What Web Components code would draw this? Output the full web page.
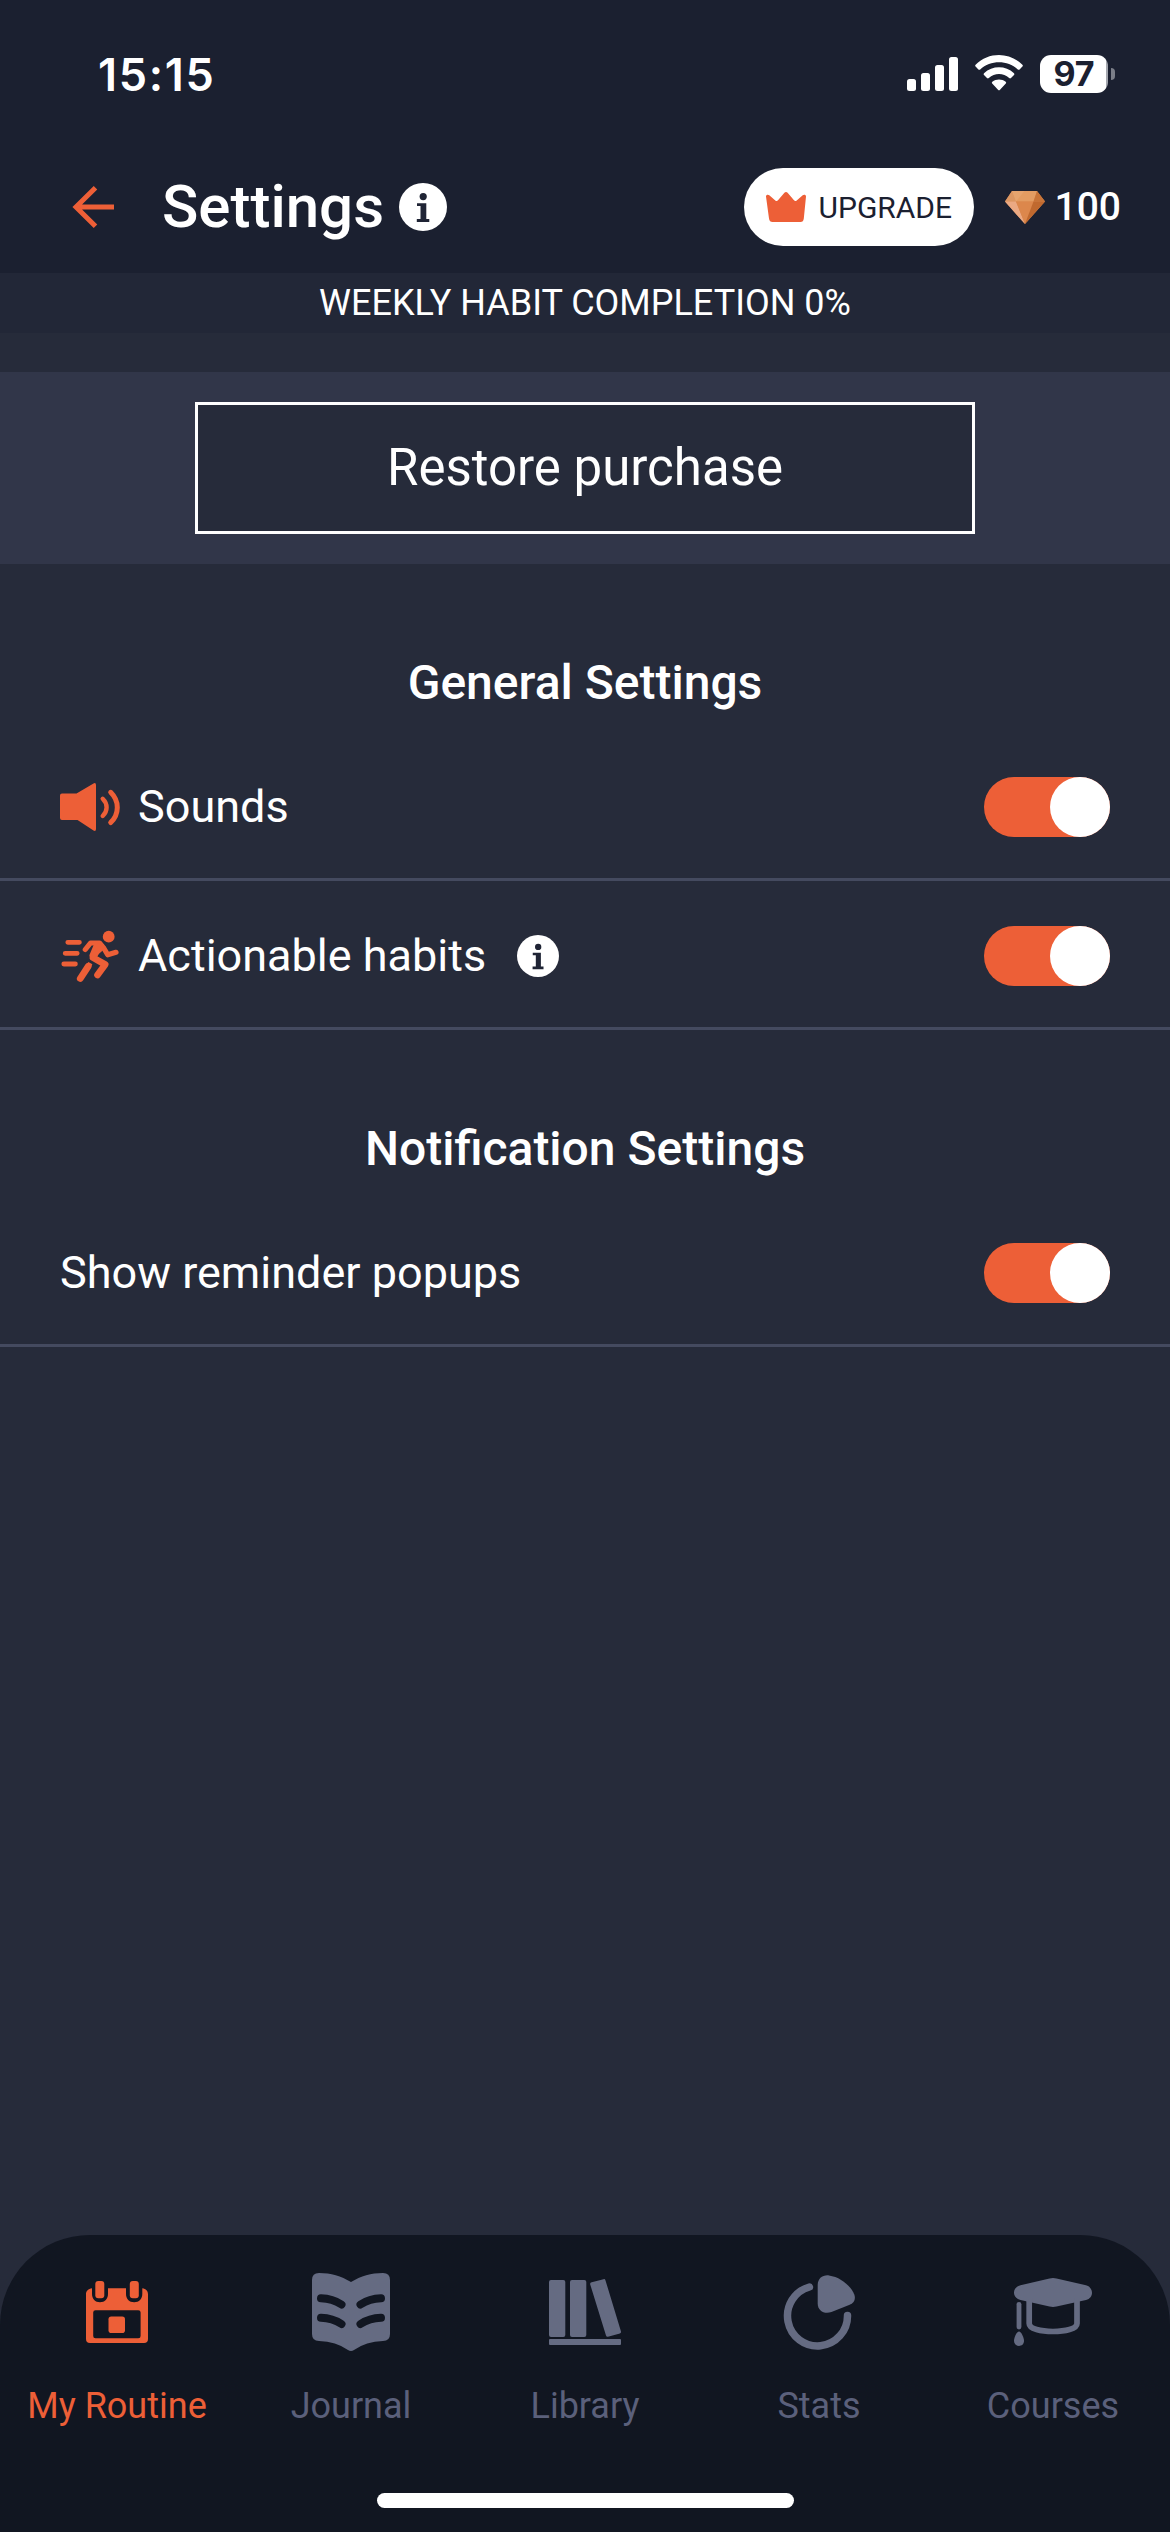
<!DOCTYPE html>
<html lang="en">
<head>
<meta charset="utf-8">
<title>Settings</title>
<style>
  html, body { margin: 0; height: 100%; background: #262b3a; }
  body { font-family: Roboto, sans-serif; color: #fff; }
</style>
</head>
<body>
<settings-app></settings-app>

<script>
const define = (name, html) => {
  const tpl = document.createElement('template');
  tpl.innerHTML = html;
  customElements.define(name, class extends HTMLElement {
    constructor() {
      super();
      this.attachShadow({ mode: 'open' }).append(tpl.content.cloneNode(true));
    }
  });
};

const ICONS = {
  back: [42, 42, `<path d="M23.5 1.8 4 21l19.500 19.200M4 21h38" fill="none" stroke="#ed5f37" stroke-width="5"/>`],
  info: [48, 48, `<circle cx="24" cy="24" r="24" fill="#fff"/><circle cx="24.200" cy="13.600" r="3.600" fill="#1f2435"/><path d="M18 20.300h9.300v15.800h3V39H17.800v-2.900h3.700V23H18z" fill="#1f2435"/>`],
  crown: [40, 30, `<path d="M0 4.500C0 2.600 2 2.200 3.300 3.300L9.300 8.400c.9.800 1.900.7 2.700-.1L18.400.8c.9-1.100 2.300-1.100 3.200 0L28 8.300c.8.800 1.800.9 2.700.1l6-5.100C38 2.200 40 2.600 40 4.500l-2.200 22C37.500 29 36.500 30 34.500 30h-28c-2 0-3.200-1-3.500-3.500z" fill="#ed5f37"/>`],
  gem: [40, 33, `<path d="M7 0h25l8 10.500L20 33 0 10.500z" fill="#d98850"/><path d="M7 0 0 10.500h11z" fill="#dc9763"/><path d="M7 0h25l-3.500 10.500H11z" fill="#e39c62"/><path d="M7 0l4 10.500L19.500 0z" fill="#e6a46e"/><path d="m32 0 8 10.500H28.500z" fill="#c87438"/><path d="M0 10.500h11L20 33z" fill="#eba983"/><path d="M11 10.500h17.500L20 33z" fill="#dc874c"/><path d="M28.500 10.500H40L20 33z" fill="#c0692f"/>`],
  signal: [51, 34, `<g fill="#fff"><rect y="22" width="9" height="12" rx="2.500"/><rect x="14" y="16" width="9" height="18" rx="2.500"/><rect x="28" y="8" width="9" height="26" rx="2.500"/><rect x="42" width="9" height="34" rx="2.500"/></g>`],
  wifi: [48, 36, `<g fill="#fff"><path d="M.6 9.800C13.500-3.200 34.500-3.200 47.400 9.800q.9.900 0 1.800L44.600 14.400q-.9.900-1.800 0C32.500 4.900 15.500 4.900 5.200 14.400q-.9.900-1.800 0L.6 11.600q-.9-.9 0-1.800z"/><path d="M9 18.200c8.500-7.900 21.500-7.900 30 0q.9.900 0 1.800l-3 3q-.9.900-1.800 0c-5.900-5.200-14.500-5.200-20.400 0q-.9.900-1.800 0l-3-3q-.9-.9 0-1.800z"/><path d="M17.300 26.700c3.900-3.100 9.500-3.100 13.400 0q1 .9.100 1.800L25 34.800q-1 1-2 0l-5.800-6.300q-.9-.9.100-1.800z"/></g>`],
  sound: [60, 48, `<path d="M2 10.500h14.500L33.500.4Q36 -.6 36 2v44q0 2.600-2.500 1.600L17.500 37H2q-2 0-2-2V12.500q0-2 2-2z" fill="#ed5f37"/><g fill="none" stroke="#ed5f37" stroke-linecap="round"><path d="M42.700 15.800c5.200 5.200 5.200 12 0 17.200" stroke-width="4.400"/><path d="M50.700 9.300c8.800 8.800 8.800 21.500 0 30.300" stroke-width="5"/></g>`],
  run: [60, 52, `<g fill="none" stroke="#ed5f37" stroke-linecap="round" stroke-linejoin="round"><path d="M7.800 12.300h11.600M5.200 23.300h12M3.800 34h11.600" stroke-width="4.800"/><path d="m25.300 19.500 5.200-6.500h9l4.500 5.500 3.700 6.300 8.300-2.500" stroke-width="5.200"/><path d="m39.500 15.500-6.500 12.200 12.200 6.800-7.700 10.500" stroke-width="6.600"/><path d="M36.500 16 32.500 25.500 41 18z" fill="#ed5f37" stroke-width="6"/><path d="M28.200 36.300 20.300 48.500" stroke-width="6.800"/><path d="m27.500 33.500 4 2.300" stroke-width="3.500" stroke-linecap="butt"/></g><circle cx="48.700" cy="6.700" r="5.900" fill="#ed5f37"/>`],
  routine: [62, 62, `<g fill="#ed5f37"><path d="M6 7.300v5.500C6 18.200 9.200 21.300 14 21.300s8-3.100 8-8.500V7.300h18v5.500c0 5.400 3.200 8.500 8.200 8.500 4.900 0 8.100-3.100 8.100-8.500V7.300c3.700.3 5.700 2.900 5.700 6V58c0 2.700-1.300 4-4 4H4c-2.700 0-4-1.300-4-4V13.300c0-3.100 2.300-5.700 6-6zM9.500 29.300Q7.200 29.300 7.200 31.600V55q0 2.300 2.300 2.300h42.800q2.300 0 2.300-2.300V31.600q0-2.300-2.300-2.300z" fill-rule="evenodd"/><rect x="9.300" width="9" height="17.300" rx="3"/><rect x="43.800" width="9" height="17.300" rx="3"/><rect x="22.500" y="35.500" width="16.500" height="16.500" rx="2.800"/></g>`],
  journal: [78, 78, `<path d="M7 0C19 0 29 3 39 9 49 3 59 0 71 0q7 0 7 7v54q0 7-7 7-17 .5-29 9-3 2-6 0Q24 68.500 7 68q-7 0-7-7V7q0-7 7-7z" fill="#656b82"/><path d="M9 25.300q11.500.4 20.500 6.200M9 44.800q11.500.4 20.500 6.200M69 25.300q-11.500.4-20.500 6.200M69 44.800q-11.500.4-20.500 6.200" fill="none" stroke="#111621" stroke-width="8" stroke-linecap="round"/>`],
  library: [72, 66, `<g fill="#656b82"><rect y="1" width="16.300" height="57" rx="2"/><rect x="21" y="1" width="16.300" height="57" rx="2"/><path d="M42.700 3.200 54.500.2q1.500-.4 2 1.200L72 52.500q.4 1.500-1.100 2L59 57.700q-1.500.4-2-1.100L41.200 5.400q-.4-1.700 1.500-2.200z"/><rect y="60" width="72" height="6" rx="1"/></g>`],
  stats: [70, 75, `<path d="M25.400 12A30 30 0 1 0 63.500 40.500" fill="none" stroke="#656b82" stroke-width="7.500" stroke-linecap="round"/><path d="M33.700 10C33.700 3.500 38.500-.3 45 .4 56.500 2 66.500 10.500 70.300 19.500c1.600 4.500-.1 8.300-4.600 10.300L47.500 37C40.500 39.500 33.700 36 33.700 28.500z" fill="#656b82"/>`],
  courses: [78, 69, `<path d="M6.500 7.300 35.500.5Q39-.4 42.500.5L72 7.300c8 2.200 8 12.500 0 14.700L42.500 28.500q-3.500.9-7 0L6.500 22C-2.200 19.800-2.200 9.500 6.500 7.300z" fill="#656b82"/><path d="M15.200 20v25.500C15.200 51 27 53.500 39 53.500S63 51 63 45.500V20" fill="none" stroke="#656b82" stroke-width="5.700"/><path d="M5 26.300v22.800" stroke="#656b82" stroke-width="4.800" stroke-linecap="round"/><path d="M5 53.400c2.200 0 5 6.100 5 9.400 0 6.900-10 6.900-10 0 0-3.300 2.800-9.400 5-9.400z" fill="#656b82"/>`]
};

customElements.define('ui-icon', class extends HTMLElement {
  constructor() { super(); this.attachShadow({ mode: 'open' }); }
  connectedCallback() {
    const [w, h, body] = ICONS[this.getAttribute('name')];
    const width = this.getAttribute('width') || w;
    this.shadowRoot.innerHTML =
      `<style>:host{display:block;flex:none}svg{display:block;overflow:visible}</style>
       <svg width="${width}" height="${width * h / w}" viewBox="0 0 ${w} ${h}">${body}</svg>`;
  }
});

define('battery-level', `
<style>
  :host { display: flex; align-items: center; gap: 3px; }
  .cell { box-sizing: border-box; width: 68px; height: 38px; border-radius: 11px;
    background: linear-gradient(90deg, #fff 66px, #a4a7af 66px);
    color: #1b2030; font: 700 34px/38px Inter, sans-serif; text-align: center; }
  .nub { width: 4px; height: 12px; border-radius: 0 4px 4px 0; background: #7b7e88; }
</style>
<div class="cell"><slot></slot></div><div class="nub"></div>`);

define('status-bar', `
<style>
  :host { display: flex; align-items: flex-start; justify-content: space-between;
    height: 168px; box-sizing: border-box; padding: 48px 55px 0 98px; }
  .time { font: 600 45px/54px Inter, sans-serif; letter-spacing: 1.7px; }
  .right { display: flex; align-items: flex-start; padding-top: 7px; }
  .signal { padding: 2px 17px 0 0; }
  .wifi { padding-right: 17px; }
</style>
<div class="time"><slot></slot></div>
<div class="right">
  <div class="signal"><ui-icon name="signal"></ui-icon></div>
  <div class="wifi"><ui-icon name="wifi"></ui-icon></div>
  <battery-level><slot name="battery"></slot></battery-level>
</div>`);

define('upgrade-button', `
<style>
  :host { display: flex; align-items: center; gap: 13px; box-sizing: border-box;
    width: 230px; height: 78px; padding-left: 22px; border-radius: 39px;
    background: #fff; color: #1b2030; font-size: 30px; white-space: nowrap; }
</style>
<ui-icon name="crown"></ui-icon><slot></slot>`);

define('app-header', `
<style>
  :host { display: flex; align-items: center; height: 78px; padding: 0 49px 27px 72px; }
  h1 { margin: 0 15px 0 48px; font-size: 60px; line-height: 78px; font-weight: 500; }
  upgrade-button { margin-left: auto; }
  .gems { display: flex; align-items: center; gap: 10px; padding-left: 31px;
    font-size: 39px; font-weight: 500; }
</style>
<ui-icon name="back"></ui-icon>
<h1><slot></slot></h1>
<ui-icon name="info"></ui-icon>
<upgrade-button>UPGRADE</upgrade-button>
<div class="gems"><ui-icon name="gem"></ui-icon><slot name="gems"></slot></div>`);

define('progress-strip', `
<style>
  :host { display: block; height: 60px; background: #222737;
    font-size: 36px; line-height: 60px; text-align: center; }
</style>
<slot></slot>`);

define('restore-panel', `
<style>
  :host { display: flex; justify-content: center; margin-top: 39px; padding: 30px 0; background: #313649; }
  button { box-sizing: border-box; width: 780px; height: 132px; padding: 0; border: 3px solid #fff;
    background: #262b3a; color: #fff; font: 400 51px/126px Roboto, sans-serif; }
</style>
<button><slot></slot></button>`);

define('toggle-switch', `
<style>
  :host { display: flex; justify-content: flex-end; width: 126px; height: 60px;
    border-radius: 30px; background: #ed5f37; }
  .knob { width: 60px; height: 60px; border-radius: 50%; background: #fff; }
</style>
<div class="knob"></div>`);

define('setting-row', `
<style>
  :host { display: flex; align-items: center; height: 60px; padding: 45px 60px 41px;
    border-bottom: 3px solid #444a5f; font-size: 45px; line-height: 60px; }
  ::slotted([slot=icon]) { margin-right: 18px; }
  ::slotted([slot=extra]) { margin-left: 31px; }
  toggle-switch { margin-left: auto; }
</style>
<slot name="icon"></slot><span><slot></slot></span><slot name="extra"></slot>
<toggle-switch></toggle-switch>`);

define('settings-section', `
<style>
  :host { display: block; padding-top: 87px; }
  h2 { margin: 0 0 17px; font-size: 48px; line-height: 64px; font-weight: 500; text-align: center; }
</style>
<h2><slot name="title"></slot></h2>
<slot></slot>`);

define('tab-item', `
<style>
  :host { display: flex; flex-direction: column; align-items: center; flex: 1 1 0;
    color: #5b607b; font-size: 36px; white-space: nowrap; }
  :host([active]) { color: #ed5f37; }
  .icon { display: flex; align-items: center; justify-content: center; height: 154px; }
  .label { line-height: 34px; }
</style>
<div class="icon"><slot name="icon"></slot></div>
<div class="label"><slot></slot></div>`);

define('tab-bar', `
<style>
  :host { display: flex; flex-direction: column; height: 297px; margin-top: auto;
    border-radius: 90px 90px 0 0; background: #111621; }
  nav { display: flex; height: 258px; }
  .home { align-self: center; width: 417px; height: 15px; border-radius: 8px; background: #fff; }
</style>
<nav><slot></slot></nav>
<div class="home"></div>`);

define('settings-app', `
<style>
  :host { display: flex; flex-direction: column; width: 1170px; height: 2532px;
    background: #262b3a; overflow: hidden; }
  header { background: #1b2030; }
</style>
<header>
  <status-bar>15:15<span slot="battery">97</span></status-bar>
  <app-header>Settings<span slot="gems">100</span></app-header>
</header>
<progress-strip>WEEKLY HABIT COMPLETION 0%</progress-strip>
<restore-panel>Restore purchase</restore-panel>
<settings-section>
  <span slot="title">General Settings</span>
  <setting-row><ui-icon slot="icon" name="sound"></ui-icon>Sounds</setting-row>
  <setting-row><ui-icon slot="icon" name="run"></ui-icon>Actionable habits<ui-icon slot="extra" name="info" width="42"></ui-icon></setting-row>
</settings-section>
<settings-section>
  <span slot="title">Notification Settings</span>
  <setting-row>Show reminder popups</setting-row>
</settings-section>
<tab-bar>
  <tab-item active><ui-icon slot="icon" name="routine"></ui-icon>My Routine</tab-item>
  <tab-item><ui-icon slot="icon" name="journal"></ui-icon>Journal</tab-item>
  <tab-item><ui-icon slot="icon" name="library"></ui-icon>Library</tab-item>
  <tab-item><ui-icon slot="icon" name="stats"></ui-icon>Stats</tab-item>
  <tab-item><ui-icon slot="icon" name="courses"></ui-icon>Courses</tab-item>
</tab-bar>`);
</script>
</body>
</html>
